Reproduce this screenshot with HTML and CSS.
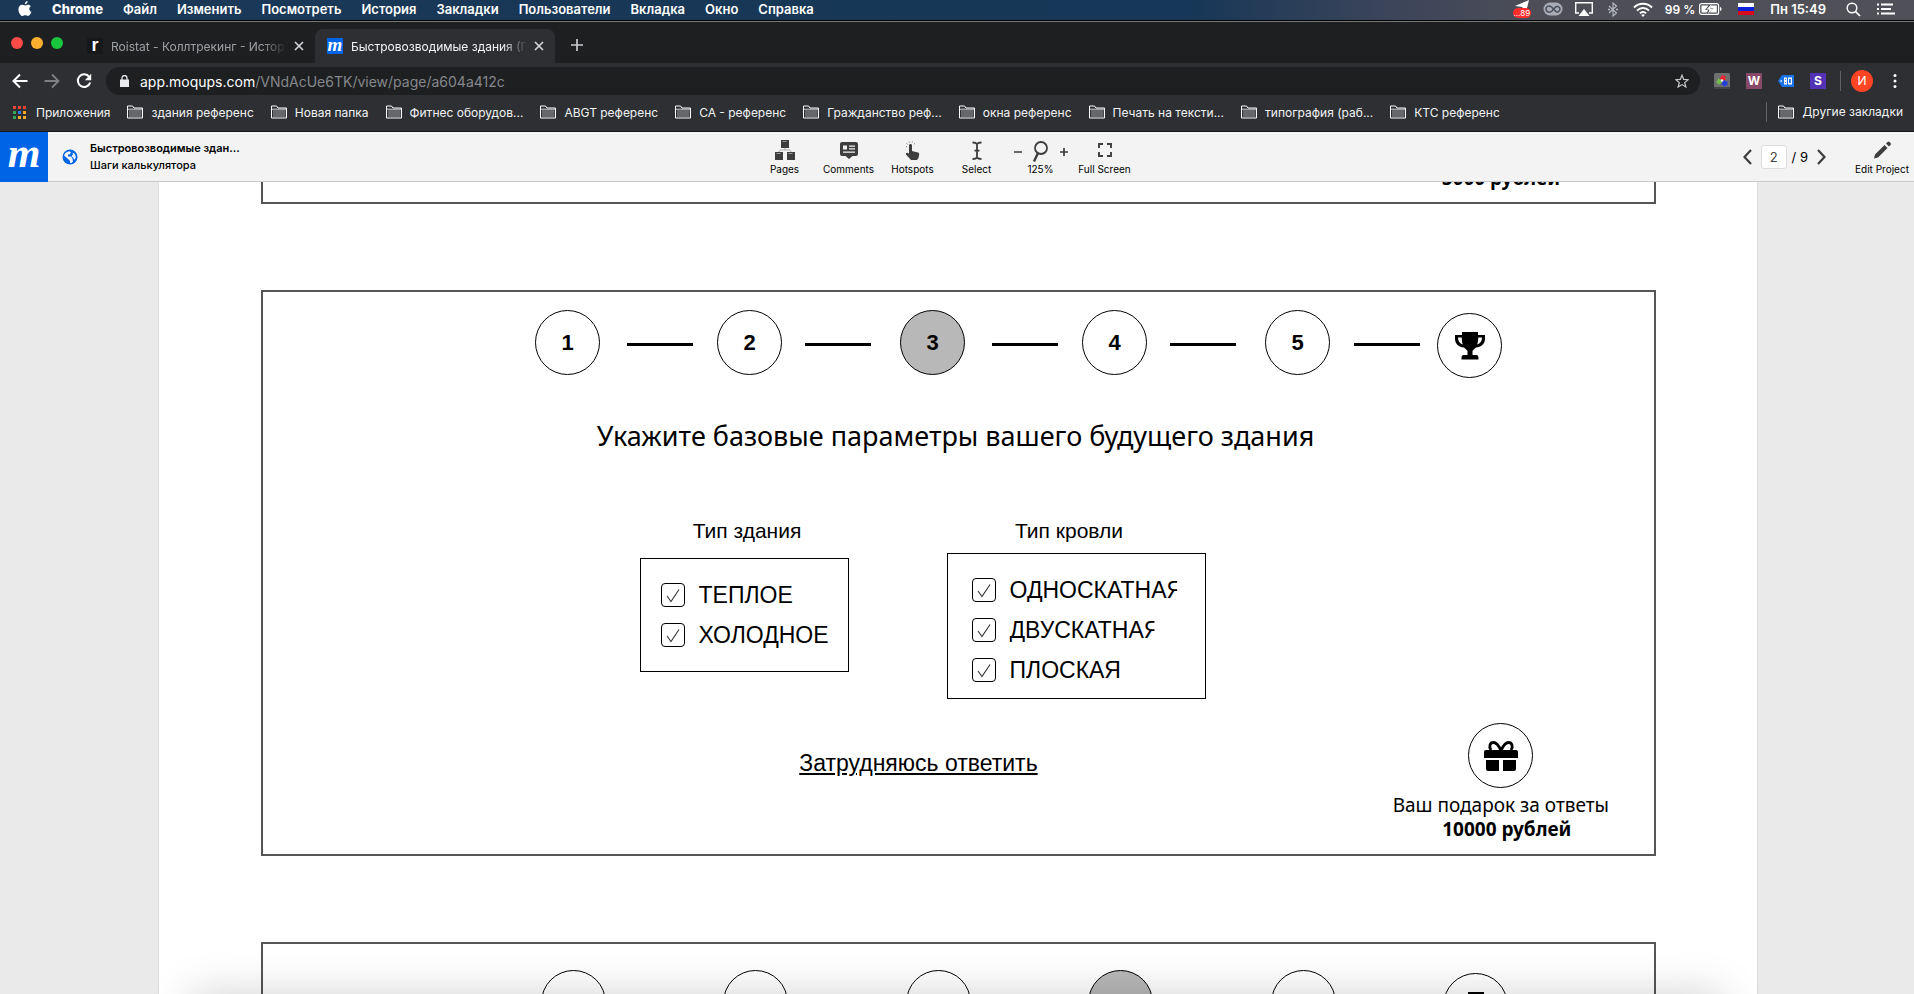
FILE: index.html
```html
<!DOCTYPE html>
<html lang="ru">
<head>
<meta charset="utf-8">
<title>Быстровозводимые здания</title>
<link rel="stylesheet" href="styles.css">
</head>
<body>
<svg class="sprite" aria-hidden="true">
  <symbol id="folder" viewBox="0 0 16 14"><path d="M.5 13V1h5l1.500 2H15.500v10z" fill="none" stroke="#fff"/><path d="M2 5h12.500v7H2z" fill="#66676a"/><path d="M1 4.200h14" stroke="#fff" stroke-width=".8"/></symbol>
  <symbol id="close" viewBox="0 0 10 10"><path d="M1 1l8 8M9 1L1 9" fill="none" stroke="currentColor" stroke-width="1.600"/></symbol>
  <symbol id="tick" viewBox="0 0 24 24"><path d="M6 13l4 5.500L18 6.500" fill="none" stroke="#333" stroke-width="1.100"/></symbol>
  <symbol id="trophy" viewBox="0 0 30 28"><path fill-rule="evenodd" d="M7 0h16v3h7v4c0 5-4 8-9 8.500-1.500 1.500-3 2.500-3.500 3.500v4H21c2 0 2.500 1 2.500 4.500h-17C6.500 24 7 23 9 23h3.500v-4c-.500-1-2-2-3.500-3.500C4 15 0 12 0 7V3h7zM6.800 5.500H3c0 3.500 1.800 6 4.800 7-.7-2-1-4.500-1-7zm16.400 0c0 2.500-.3 5-1 7 3-1 4.800-3.500 4.800-7z"/></symbol>
</svg>

<nav class="menubar">
  <svg class="apple" viewBox="0 0 14 17"><path d="M9.800 0c.1 1.800-1.300 3.400-3 3.500C6.600 1.800 8.200.2 9.800 0zM7.200 4.700c.8 0 1.700-.9 3.100-.8 1.200 0 2.300.6 3 1.600-2.600 1.500-2.100 5 .6 6-.7 2-2.200 4.400-3.700 4.400-1.200 0-1.600-.7-2.900-.7-1.400 0-1.800.7-2.900.7C2.400 15.900 0 12 0 8.900 0 5.800 2 4.100 3.900 4.100c1.300 0 2.400.6 3.300.6z" fill="#fff"/></svg>
  <b>Chrome</b><span>Файл</span><span>Изменить</span><span>Посмотреть</span><span>История</span><span>Закладки</span><span>Пользователи</span><span>Вкладка</span><span>Окно</span><span>Справка</span>
  <div class="status">
    <span class="send"><svg width="14" height="12" viewBox="0 0 14 12"><path d="M0 6L14 0l-3 12-4-5z" fill="#fff"/></svg><i>...89</i></span>
    <svg width="20" height="14" viewBox="0 0 20 14"><rect x=".5" y=".5" width="19" height="13" rx="6.500" fill="#a9abb4"/><path d="M13 9.500L8.500 5C5.500 2.500 2.500 5 3 7.500c.6 3 4 3.500 6 1.500l3-3.500c2-2 5-.800 5 1.600 0 2.500-3 3.800-5 1.900" fill="none" stroke="#4a4f5e" stroke-width="1.500"/></svg>
    <svg width="18" height="15" viewBox="0 0 18 15"><path d="M4 11H.7V.7h16.600V11H14" fill="none" stroke="#fff" stroke-width="1.400"/><path d="M9 7l5.500 7h-11z" fill="#fff"/></svg>
    <svg class="bt" width="12" height="15" viewBox="0 0 12 15"><path d="M2 4l7.500 7L6 14V1l3.500 3L2 11" fill="none" stroke="#b9bbc2" stroke-width="1.100"/><path d="M1 7.500h2m6 0h2" stroke="#b9bbc2" stroke-width="1.500"/></svg>
    <svg width="20" height="15" viewBox="0 0 20 15"><path d="M1 5.500c5-5 13-5 18 0M4 8.600c3.400-3.400 8.600-3.400 12 0M6.900 11.400c1.800-1.800 4.400-1.800 6.200 0" fill="none" stroke="#fff" stroke-width="1.900"/><path d="M8.200 13a2.600 2.600 0 013.600 0L10 15z" fill="#fff"/></svg>
    <span class="charge">99 %</span>
    <svg class="batt" width="23" height="12" viewBox="0 0 23 12"><rect x=".6" y=".6" width="19" height="10.800" rx="2" fill="none" stroke="#fff" stroke-width="1.200"/><path d="M2.500 2.500h7L6 7h3l-1 2.500H2.500zM12 2.500h5.800v7h-7L14.500 5h-3zM12.500 1L7.500 6.500h3L9 11l5-5.500h-3z" fill="#fff"/><path d="M21 4c2 .5 2 3.500 0 4z" fill="#fff"/></svg>
    <svg class="flag" width="16" height="12" viewBox="0 0 16 12"><path fill="#fff" d="M0 0h16v4H0z"/><path fill="#0a22d8" d="M0 4h16v4H0z"/><path fill="#d80b1c" d="M0 8h16v4H0z"/></svg>
    <span class="clock">Пн 15:49</span>
    <svg class="find" width="15" height="15" viewBox="0 0 15 15"><circle cx="6" cy="6" r="4.800" fill="none" stroke="#fff" stroke-width="1.500"/><path d="M9.500 9.500l4.500 4.500" stroke="#fff" stroke-width="1.700"/></svg>
    <svg width="18" height="12" viewBox="0 0 18 12"><path d="M0 1.500h2m2 0h12M0 6h2m2 0h10M0 10.500h2m2 0h14" stroke="#fff" stroke-width="2"/></svg>
  </div>
</nav>

<header class="browser">
  <div class="tabs">
    <span class="light red"></span><span class="light amber"></span><span class="light green"></span>
    <div class="tab"><span class="fav dark">r</span><span class="title">Roistat - Коллтрекинг - Истор</span><button aria-label="Закрыть"><svg><use href="#close"/></svg></button></div>
    <div class="tab active"><span class="fav blue">m</span><span class="title">Быстровозводимые здания (П</span><button aria-label="Закрыть"><svg><use href="#close"/></svg></button></div>
    <button class="plus" aria-label="Новая вкладка"><svg viewBox="0 0 12 12"><path d="M6 0v12M0 6h12" stroke="#c8cacd" stroke-width="1.700"/></svg></button>
  </div>
  <div class="address">
    <button aria-label="Назад"><svg viewBox="0 0 16 16"><path d="M15.500 8H2M8 1.500L1.500 8 8 14.500" fill="none" stroke="#fff" stroke-width="2"/></svg></button>
    <button aria-label="Вперёд"><svg viewBox="0 0 16 16"><path d="M.5 8H14M8 1.500L14.500 8 8 14.500" fill="none" stroke="#7e8083" stroke-width="1.800"/></svg></button>
    <button aria-label="Обновить"><svg viewBox="0 0 16 16"><path d="M13.300 4A6.300 6.300 0 1014.200 9.500" fill="none" stroke="#fff" stroke-width="2"/><path d="M15.200.8v6.400H8.800z" fill="#fff"/></svg></button>
    <div class="url">
      <svg width="9" height="12" viewBox="0 0 9 12"><path d="M0 4.500h9V12H0z" fill="#e8eaed"/><path d="M2 5V3a2.500 2.500 0 015 0v2" fill="none" stroke="#e8eaed" stroke-width="1.300"/></svg>
      <span><em>app.moqups.com</em>/VNdAcUe6TK/view/page/a604a412c</span>
      <svg class="star" width="14" height="14" viewBox="0 0 14 14"><path d="M7 1.200l1.700 4.200 4.500.3-3.500 2.900 1.200 4.400L7 10.600 3.100 13l1.200-4.400L.8 5.700l4.500-.3z" fill="none" stroke="#c8cacd" stroke-width="1.200"/></svg>
    </div>
    <div class="ext">
      <svg viewBox="0 0 16 16"><rect width="16" height="16" rx="1.500" fill="#6d6e70"/><path d="M0 14h16v2H0z" fill="#444"/><path d="M8.500 1.500l1.200 1.600 2-.1-.6 2 1 1.700-2 .6-1.600 1.200-1.100-1.700-2-.5 1.100-1.700z" fill="#ef2431"/><path d="M4.500 5l1.300 1.500 2-.1-.7 1.900 1 1.700-2 .4L4.600 12l-1-1.900-2-.5L3 8z" fill="#6fc04a"/><path d="M10.500 7l1.300 1.300 2 .1-.6 2 .8 1.800-2 .3-1.500 1.400-1.200-1.600-2-.4 1-1.800L8 8.400z" fill="#2440d8"/><circle cx="8" cy="7.500" r="1.200" fill="#fff"/></svg>
      <span class="w">W</span>
      <svg viewBox="0 0 16 16"><path d="M0 8l4-6h12v12H4z" fill="#1a73e8"/><path d="M6 4.500h3v7H6zM10 4.500h4v7h-4zM2.500 7.300h1.400v1.400H2.500z" fill="#fff"/><path d="M7 6h1v1H7zM7 9h1v1H7zM11 6h1.800v4H11z" fill="#1a73e8"/></svg>
      <span class="s">S</span>
    </div>
    <span class="rule"></span>
    <span class="avatar">И</span>
    <button class="dots" aria-label="Меню"><svg viewBox="0 0 4 16"><circle cx="2" cy="2.500" r="1.500" fill="#fff"/><circle cx="2" cy="8" r="1.500" fill="#fff"/><circle cx="2" cy="13.500" r="1.500" fill="#fff"/></svg></button>
  </div>
  <nav class="bookmarks">
    <a href="#"><svg class="apps" viewBox="0 0 13 13"><path d="M0 0h3v3H0zM5 0h3v3H5zM10 0h3v3h-3z" fill="#ea4335"/><path d="M0 5h3v3H0zM0 10h3v3H0z" fill="#34a853"/><path d="M5 5h3v3H5z" fill="#2b7de9"/><path d="M10 5h3v3h-3zM5 10h3v3H5zM10 10h3v3h-3z" fill="#f9a825"/></svg>Приложения</a>
    <a href="#"><svg><use href="#folder"/></svg>здания референс</a>
    <a href="#"><svg><use href="#folder"/></svg>Новая папка</a>
    <a href="#"><svg><use href="#folder"/></svg>Фитнес оборудов...</a>
    <a href="#"><svg><use href="#folder"/></svg>ABGT референс</a>
    <a href="#"><svg><use href="#folder"/></svg>CA - референс</a>
    <a href="#"><svg><use href="#folder"/></svg>Гражданство реф...</a>
    <a href="#"><svg><use href="#folder"/></svg>окна референс</a>
    <a href="#"><svg><use href="#folder"/></svg>Печать на тексти...</a>
    <a href="#"><svg><use href="#folder"/></svg>типография (раб...</a>
    <a href="#"><svg><use href="#folder"/></svg>КТС референс</a>
    <a href="#" class="other"><svg><use href="#folder"/></svg>Другие закладки</a>
  </nav>
</header>

<header class="toolbar">
  <div class="project">
    <a class="logo" href="#">m</a>
    <svg class="globe" viewBox="0 0 16 16"><circle cx="8" cy="8" r="7.500" fill="#0064e6"/><path d="M2 6.500c1-2.500 3-4 5.500-4.200L9 3.500 7.500 5.500H6v2h3l1.500 2 .5 3-1.500 1.500L8 14v-2L6.500 10.500 5 9z" fill="#f3f3f3"/><path d="M2.200 7l4 4v2.600C4 12.800 2.300 10.500 2.200 7z" fill="#0064e6"/><path d="M10.500 3.500c2 .8 3.200 2.500 3.300 5-.3 1-.8 1.700-1.500 2.200L11 8.500 9.500 7l1.500-1.500z" fill="#f3f3f3"/></svg>
    <div class="names"><strong>Быстровозводимые здан...</strong><span>Шаги калькулятора</span></div>
  </div>
  <div class="tools">
    <button><svg viewBox="0 0 22 22"><path d="M7 0h8v8H7zM1 12h8v8H1zM13 12h8v8h-8z" fill="#3d3d3d"/><path d="M8.500 1.500h4M2.500 13.500h4M14.500 13.500h4" stroke="#aaa" stroke-width=".8"/><path d="M11 8v2M5 12c0-1.500 1-2 2-2h8c1 0 2 .5 2 2" fill="none" stroke="#999" stroke-width=".8"/></svg>Pages</button>
    <button><svg viewBox="0 0 22 22"><path d="M4 2h14q2 0 2 2v10q0 2-2 2h-3.500L11 19l-3.500-3H4q-2 0-2-2V4q0-2 2-2z" fill="#3d3d3d"/><path d="M5 5.500h4v4H5zM11 5.500h6v1.200h-6zM11 8.300h6v1.200h-6zM5 11.500h12v1.200H5z" fill="#f3f3f3"/></svg>Comments</button>
    <button><svg viewBox="0 0 22 22"><path d="M7 5.500c0-2 3-2 3 0V11l6 1.500c1 .3 1.300 1 1.200 2L16.500 18l-1.500 2H9L4 14.500c-.5-1.500 1-2.300 2-1.500l1 .800z" fill="#3d3d3d"/><path d="M4 6.500l1 .2M4.500 3.500l1 .8M7 1.500l.4 1M10.500 1.500l-.4 1M13 3.500l-1 .8" stroke="#777" stroke-width="1"/></svg>Hotspots</button>
    <button><svg viewBox="0 0 22 22"><path d="M6.500 2.500q3.500 0 4.500 1.500Q12 2.500 15.500 2.500M6.500 19q3.500 0 4.500-1.500 1 1.500 4.500 1.500M11 4V17.500M8.500 10.700h5" fill="none" stroke="#3d3d3d" stroke-width="1.800"/></svg>Select</button>
    <button class="zoom"><svg viewBox="0 0 60 22"><path d="M3 12h8M49 12h8M53 8v8" stroke="#3d3d3d" stroke-width="1.700"/><circle cx="30" cy="8" r="6" fill="none" stroke="#3d3d3d" stroke-width="1.800"/><path d="M27 13l-4 8.500" stroke="#3d3d3d" stroke-width="2.400"/></svg>125%</button>
    <button><svg viewBox="0 0 22 22"><path d="M5 8V4h4M13 4h4v4M17 12v4h-4M9 16H5v-4" fill="none" stroke="#3d3d3d" stroke-width="1.900"/></svg>Full Screen</button>
  </div>
  <div class="pager">
    <button aria-label="Назад"><svg viewBox="0 0 9 16"><path d="M8 1L1.500 8 8 15" fill="none" stroke="#3d3d3d" stroke-width="2.200"/></svg></button>
    <input type="text" value="2" aria-label="Страница"><span>/ 9</span>
    <button aria-label="Вперёд"><svg viewBox="0 0 9 16"><path d="M1 1l6.500 7L1 15" fill="none" stroke="#3d3d3d" stroke-width="2.200"/></svg></button>
    <button class="edit"><svg viewBox="0 0 22 22"><path d="M4 14.500L13.500 5l3 3L7 17.500l-4 1zM15 3.500L16.500 2q1-1 2 0l1 1q1 1 0 2L18 6.500z" fill="#3d3d3d"/></svg>Edit Project</button>
  </div>
</header>

<main class="canvas">
  <div class="paper">
    <section class="screen tail">
      <p class="gift"><b>5000 рублей</b></p>
    </section>

    <section class="screen">
      <ol class="steps">
        <li class="dot">1</li><li class="link"></li><li class="dot">2</li><li class="link even"></li><li class="dot on">3</li><li class="link"></li><li class="dot">4</li><li class="link even"></li><li class="dot">5</li><li class="link last"></li><li class="dot prize"><svg><use href="#trophy"/></svg></li>
      </ol>
      <h1>Укажите базовые параметры вашего будущего здания</h1>
      <div class="choices">
        <fieldset>
          <legend>Тип здания</legend>
          <div class="box small">
            <label><input type="checkbox" checked><svg><use href="#tick"/></svg><span>ТЕПЛОЕ</span></label>
            <label><input type="checkbox" checked><svg><use href="#tick"/></svg><span>ХОЛОДНОЕ</span></label>
          </div>
        </fieldset>
        <fieldset>
          <legend>Тип кровли</legend>
          <div class="box large">
            <label><input type="checkbox" checked><svg><use href="#tick"/></svg><span class="cut">ОДНОСКАТНАЯ</span></label>
            <label><input type="checkbox" checked><svg><use href="#tick"/></svg><span class="cut">ДВУСКАТНАЯ</span></label>
            <label><input type="checkbox" checked><svg><use href="#tick"/></svg><span>ПЛОСКАЯ</span></label>
          </div>
        </fieldset>
      </div>
      <div class="bottom">
        <a class="skip" href="#">Затрудняюсь ответить</a>
        <div class="gift">
          <span class="dot"><svg class="present" viewBox="0 0 34 30"><path d="M2 9h30q2 0 2 2v6H0v-6q0-2 2-2zM2 19h13v11H4q-2 0-2-2zM19 19h13v9q0 2-2 2H19z"/><path d="M17 9.500C14.500 4 12.500 1.500 9.500 1.500 6 1.500 4.500 5.500 7 9M17 9.500c2.500-5.500 4.500-8 7.500-8 3.500 0 5 4 2.500 7.500" fill="none" stroke="#000" stroke-width="2.800"/></svg></span>
          <p>Ваш подарок за ответы<br><b>10000 рублей</b></p>
        </div>
      </div>
    </section>

    <section class="screen next">
      <ol class="steps">
        <li class="dot">1</li><li class="link"></li><li class="dot">2</li><li class="link even"></li><li class="dot">3</li><li class="link"></li><li class="dot on">4</li><li class="link even"></li><li class="dot">5</li><li class="link last"></li><li class="dot prize"><svg><use href="#trophy"/></svg></li>
      </ol>
    </section>
  </div>
  <div class="shade"></div>
</main>
</body>
</html>
```
FILE: styles.css
```css
* { box-sizing: border-box; }
body { margin: 0; height: 100vh; display: flex; flex-direction: column; overflow: hidden; font-family: Inter, "Liberation Sans", sans-serif; color: #000; }
button { border: 0; padding: 0; background: none; font: inherit; color: inherit; display: flex; align-items: center; justify-content: center; }
svg { flex: none; display: block; }
a { color: inherit; }
.sprite { position: absolute; width: 0; height: 0; }

.menubar { flex: none; height: 21px; padding: 0 19px 2px 18px; display: flex; align-items: center; gap: 20px; border-bottom: 1px solid #000; background: linear-gradient(90deg, #1b3857 0, #163757 62%, #3a445a 72%, #4c4d57 80%, #505158 100%); color: #fff; font-size: 13px; font-weight: 600; }
.apple { width: 14px; height: 16px; }
.menubar b { font-weight: 800; }
.status { margin-left: auto; display: flex; align-items: center; gap: 12px; }
.send { position: relative; width: 18px; height: 18px; display: flex; justify-content: center; }
.send i { position: absolute; left: 0; bottom: 0; width: 18px; height: 10px; border-radius: 5px; background: #fb2d2d; font: 8px/10px Inter, sans-serif; text-align: center; }
.bt { margin: 0 2px; }
.charge { font-size: 12px; margin-right: -8px; }
.flag, .clock { margin-left: 4px; }
.find { margin: 0 4px 0 8px; }

.browser { flex: none; background: #2e2f33; color: #e8eaed; font-size: 12px; border-top: 1px solid #77797b; border-bottom: 1px solid #17181a; }
.tabs { height: 41px; padding: 0 11px; display: flex; align-items: center; background: #1e1f21; }
.light { width: 12px; height: 12px; margin-right: 8px; border-radius: 50%; }
.red { background: #ff4b47; } .amber { background: #fdb02f; } .green { background: #18c53c; }
.tab { align-self: flex-end; width: 240px; height: 34px; padding: 0 11px 0 12px; display: flex; align-items: center; border-radius: 8px 8px 0 0; color: #9da0a4; }
.tab:not(.active) { margin-left: 4px; }
.active { background: #2e2f33; color: #f1f3f4; }
.fav { flex: none; width: 16px; height: 16px; margin-right: 8px; text-align: center; font: 900 18px/15px "Liberation Sans", sans-serif; color: #fff; }
.dark { background: #17181a; }
.blue { background: #0064e6; font: italic 700 19px/14px "Liberation Serif", serif; }
.title { flex: 1; min-width: 0; overflow: hidden; white-space: nowrap; mask-image: linear-gradient(90deg, #000 86%, transparent); }
.tab button { margin-left: 7px; width: 10px; color: #d7d9dc; }
.tab button svg { width: 10px; height: 10px; }
.plus { margin-left: 16px; padding-top: 4px; }
.plus svg { width: 12px; height: 12px; }
.address { height: 36px; padding: 0 17px 0 12px; display: flex; align-items: center; }
.address button svg { width: 16px; height: 16px; }
.address button { margin-right: 16px; }
.url { flex: 1; height: 28px; margin: 0 14px 0 -2px; padding: 0 11px 0 14px; display: flex; align-items: center; gap: 11px; border-radius: 14px; background: #1e1f21; color: #85878b; font-size: 14px; }
.url em { font-style: normal; color: #fff; }
.star { margin-left: auto; }
.ext { display: flex; gap: 16px; }
.ext > * { width: 16px; height: 16px; text-align: center; color: #fff; font: 700 12px/16px Inter, sans-serif; }
.w { background: #86496a; } .s { background: #5432b5; }
.rule { width: 1px; height: 20px; margin: 0 10px 0 14px; background: #5f6165; }
.avatar { width: 22px; height: 22px; margin-right: 20px; border-radius: 50%; background: #ff4524; color: #fff; text-align: center; line-height: 22px; }
.address .dots { margin: 0; width: 4px; }
.address .dots svg { width: 4px; }
.bookmarks { height: 32px; padding: 0 11px 6px 13px; display: flex; align-items: center; gap: 17px; white-space: nowrap; }
.bookmarks a { display: flex; align-items: center; gap: 8px; text-decoration: none; color: #f1f3f4; }
.bookmarks svg { width: 16px; height: 14px; }
.bookmarks .apps { width: 13px; height: 13px; margin-right: 2px; }
.bookmarks .other { margin-left: auto; padding-left: 11px; border-left: 1px solid #5f6165; line-height: 20px; }

.toolbar { flex: none; height: 50px; display: grid; grid-template-columns: 1fr auto 1fr; background: #f3f3f3; border-bottom: 1px solid #c8c8c8; position: relative; z-index: 1; font-size: 10px; }
.project { display: flex; align-items: center; }
.logo { width: 48px; height: 50px; background: #0064e6; color: #fff; text-align: center; text-decoration: none; font: italic 700 42px/42px "Liberation Serif", serif; }
.globe { width: 16px; height: 16px; margin: 0 12px 0 14px; }
.names { display: flex; flex-direction: column; font-size: 11px; line-height: 17px; }
.names strong { font-weight: 600; }
.names span { font-weight: 500; }
.tools { display: flex; padding-right: 25px; }
.tools button, .edit { width: 64px; flex-direction: column; gap: 1px; white-space: nowrap; }
.tools svg, .edit svg { width: 22px; height: 22px; }
.tools .zoom svg { width: 60px; }
.pager { display: flex; align-items: center; justify-content: flex-end; gap: 9px; font-size: 13px; }
.pager > button:not(.edit) svg { width: 9px; height: 16px; }
.pager input { width: 26px; height: 24px; margin-right: -4px; padding: 0; border: 1px solid #ddd; border-radius: 3px; background: #fff; text-align: center; font: 13px Inter, sans-serif; color: #444; }
.pager .edit { margin-left: 15px; font-size: 10px; }

.canvas { flex: 1; min-height: 0; position: relative; overflow: hidden; background: #eaeaea; padding: 0 156px 0 158px; }
.paper { padding: 0 101px 0 102px; background: #fff; border: 1px solid #ddd; border-width: 0 1px; height: 100%; }
.screen { border: 2px solid #555; height: 566px; display: flex; flex-direction: column; }
.tail { height: 22px; border-top: 0; justify-content: flex-end; align-items: flex-end; }
.steps { list-style: none; margin: 18px 0 0; padding: 0 0 0 120px; display: flex; justify-content: center; align-items: center; }
.dot { width: 65px; height: 65px; border: 1px solid #000; border-radius: 50%; display: flex; align-items: center; justify-content: center; font: 700 22px "Liberation Sans", sans-serif; background: #fff; }
.on { background: #b8b8b8; }
.link { width: 66px; height: 3px; margin: 0 24px 0 27px; background: #000; }
.even { margin: 0 29px 0 23px; }
.last { margin: 0 17px 0 24px; }
.prize { margin-top: 3px; }
.prize svg { width: 30px; height: 28px; }
.steps .dot:not(.prize) { margin-bottom: 3px; }
h1 { margin: 38px 0 0; padding-right: 6px; text-align: center; font: 400 27px/40px "Noto Sans", sans-serif; }
.choices { margin: 62px 72px 0 0; display: flex; justify-content: center; gap: 98px; }
fieldset { margin: 0; padding: 0; border: 0; min-width: 0; }
legend { padding: 0 0 0 6px; margin: 0 auto; font: 21px/26px "Liberation Sans", sans-serif; }
fieldset + fieldset legend { padding: 0 14px 0 0; }
.box { border: 1px solid #000; display: flex; flex-direction: column; gap: 16px; }
.small { width: 209px; height: 114px; margin-top: 14px; padding: 24px 0 0 20px; }
.large { width: 259px; height: 146px; margin-top: 9px; padding: 24px 0 0 24px; }
label { height: 24px; display: grid; grid-template-columns: 24px auto; justify-content: start; align-items: center; column-gap: 14px; font: 23px/24px "Liberation Sans", sans-serif; }
label input, label svg { grid-area: 1 / 1; width: 24px; height: 24px; margin: 0; }
label input { appearance: none; border: 1px solid #000; border-radius: 4px; }
label svg { pointer-events: none; }
.cut { clip-path: inset(0 6px 0 0); }
.bottom { margin-top: 24px; display: grid; grid-template-columns: 1fr auto; }
.skip { justify-self: end; margin: 26px 0 0; padding-right: 355px; font: 23px/28px "Liberation Sans", sans-serif; color: #000; text-underline-offset: 2px; }
.gift { margin: 0 45px 0 0; text-align: center; display: flex; flex-direction: column; align-items: center; font: 19px/24px "Noto Sans", sans-serif; }
.gift p { margin: 5px 0 0; }
.gift p b { padding-left: 12px; }
.present { width: 34px; height: 30px; }
.tail .gift { margin: 0 94px 12px 0; }
.tail + .screen { margin-top: 86px; }
.next { margin-top: 86px; }
.next .steps { margin-top: 26px; padding-left: 132px; }
.shade { position: absolute; left: 10%; right: 10%; top: 100%; height: 60px; box-shadow: 0 0 44px rgba(0, 0, 0, .18); }
```
